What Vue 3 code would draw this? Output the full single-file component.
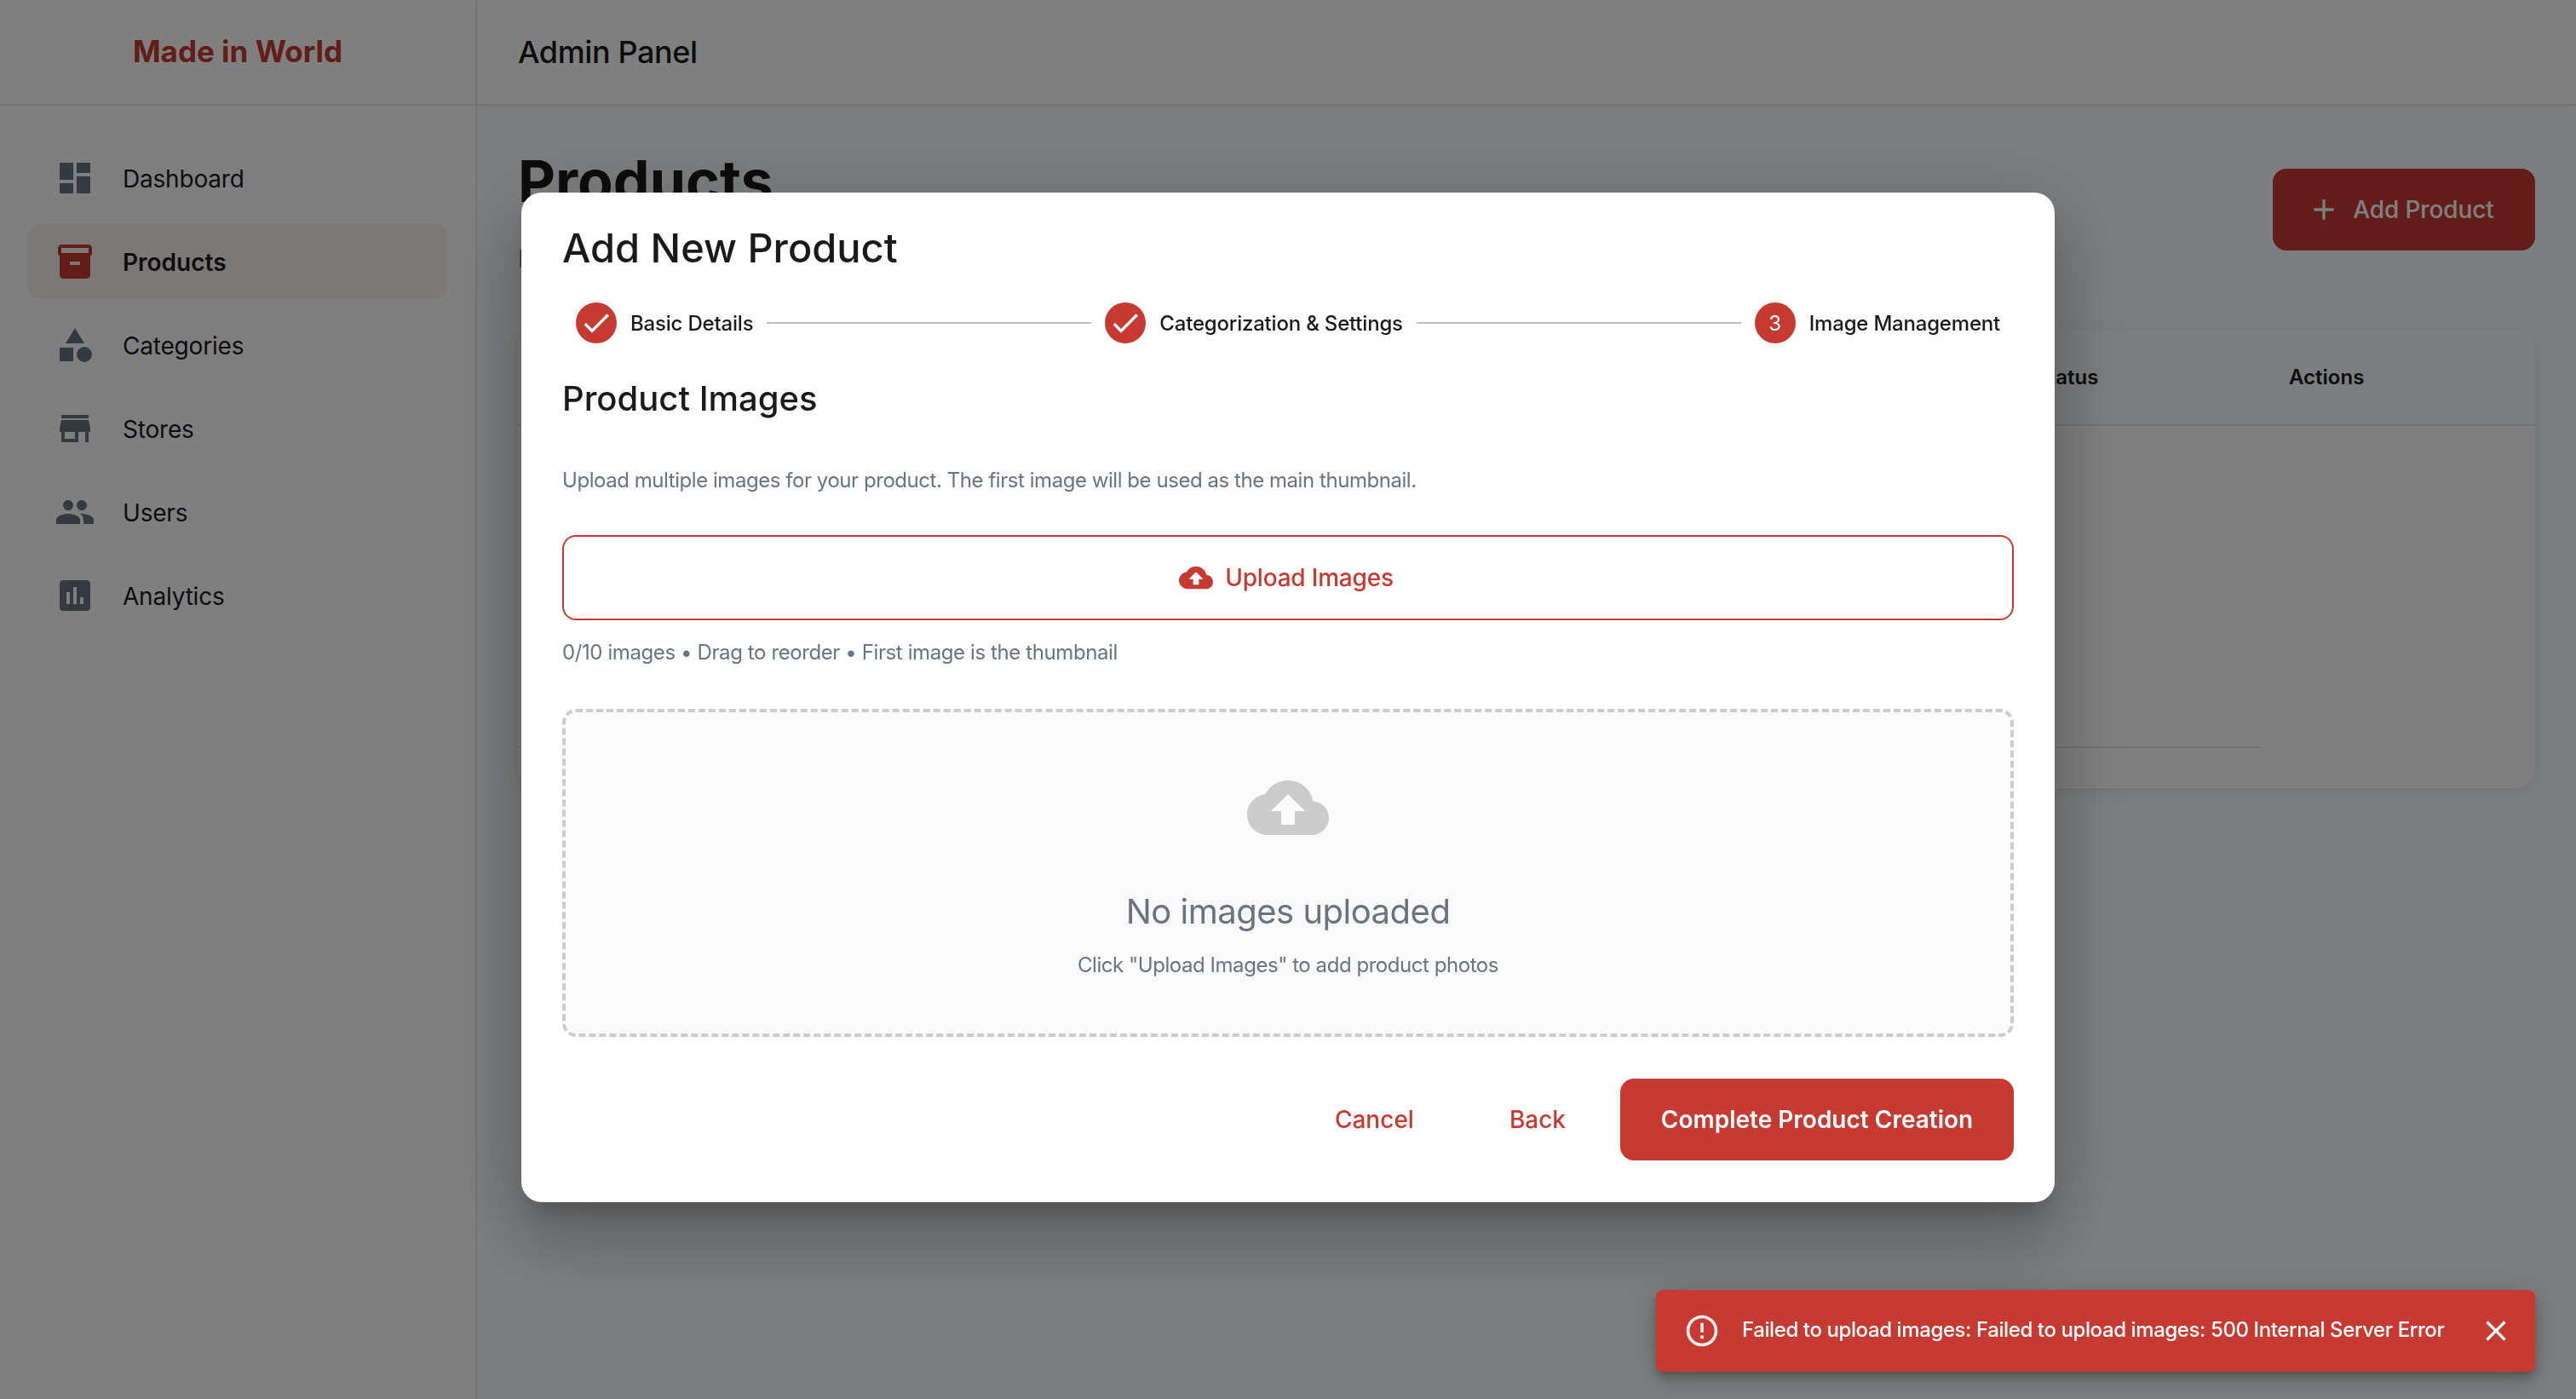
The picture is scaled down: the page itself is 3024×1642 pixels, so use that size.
<script setup>
const navItems = [
  { label: "Dashboard", icon: "M3 13h8V3H3v10zm0 8h8v-6H3v6zm10 0h8V11h-8v10zm0-18v6h8V3h-8z" },
  { label: "Products", active: true, icon: "M20 2H4c-1 0-2 .9-2 2v3.01c0 .72.43 1.34 1 1.69V20c0 1.1 1.1 2 2 2h14c.9 0 2-.9 2-2V8.7c.57-.35 1-.97 1-1.69V4c0-1.1-1-2-2-2zm-5 12H9v-2h6v2zm5-7H4V4l16-.02V7z" },
  { label: "Categories", icon: "M12 2l-5.5 9h11zM3 13.5h8v8H3zM17.5 13a4.5 4.5 0 1 0 0 9 4.5 4.5 0 0 0 0-9z" },
  { label: "Stores", icon: "M20 4H4v2h16V4zm1 10v-2l-1-5H4l-1 5v2h1v6h10v-6h4v6h2v-6h1zm-9 4H6v-4h6v4z" },
  { label: "Users", icon: "M16 11c1.66 0 2.99-1.34 2.99-3S17.66 5 16 5c-1.66 0-3 1.34-3 3s1.34 3 3 3zm-8 0c1.66 0 2.99-1.34 2.99-3S9.66 5 8 5C6.34 5 5 6.34 5 8s1.34 3 3 3zm0 2c-2.33 0-7 1.17-7 3.5V19h14v-2.5c0-2.33-4.67-3.5-7-3.5zm8 0c-.29 0-.62.02-.97.05 1.16.84 1.97 1.97 1.97 3.45V19h6v-2.5c0-2.33-4.67-3.5-7-3.5z" },
  { label: "Analytics", icon: "M19 3H5c-1.1 0-2 .9-2 2v14c0 1.1.9 2 2 2h14c1.1 0 2-.9 2-2V5c0-1.1-.9-2-2-2zM9 17H7v-7h2v7zm4 0h-2V7h2v10zm4 0h-2v-4h2v4z" },
];

const steps = [
  { label: "Basic Details", done: true },
  { label: "Categorization & Settings", done: true },
  { label: "Image Management", done: false, number: 3 },
];

const cloudUpload =
  "M19.35 10.04C18.67 6.59 15.64 4 12 4 9.11 4 6.6 5.64 5.35 8.04 2.34 8.36 0 10.91 0 14c0 3.31 2.69 6 6 6h13c2.76 0 5-2.24 5-5 0-2.64-2.05-4.78-4.65-4.96zM14 13v4h-4v-4H7l5-5 5 5h-3z";
</script>

<template>
  <div class="layout">
    <aside class="sidebar">
      <div class="logo">Made in World</div>
      <nav class="nav">
        <a
          v-for="item in navItems"
          :key="item.label"
          class="nav-item"
          :class="{ active: item.active }"
        >
          <svg class="nav-icon" viewBox="0 0 24 24"><path :d="item.icon" /></svg>
          <span>{{ item.label }}</span>
        </a>
      </nav>
    </aside>

    <div class="content">
      <header class="topbar">Admin Panel</header>
      <main class="main">
        <div class="page-head">
          <div>
            <h1>Products</h1>
            <p class="page-sub">Manage</p>
          </div>
          <button class="add-btn">
            <svg viewBox="0 0 24 24"><path d="M19 13h-6v6h-2v-6H5v-2h6V5h2v6h6v2z" /></svg>
            Add Product
          </button>
        </div>

        <section class="table-card">
          <div class="table-head">
            <span>Status</span>
            <span>Actions</span>
          </div>
          <div class="table-body"></div>
          <div class="table-rule"></div>
        </section>
      </main>
    </div>

    <div class="overlay">
      <div class="modal">
        <h2 class="modal-title">Add New Product</h2>

        <div class="stepper">
          <template v-for="(step, i) in steps" :key="step.label">
            <div v-if="i > 0" class="step-line"></div>
            <div class="step">
              <span class="step-dot">
                <svg v-if="step.done" viewBox="0 0 24 24">
                  <path d="M9 16.17L4.83 12l-1.41 1.41L9 19 21 7l-1.41-1.41z" />
                </svg>
                <template v-else>{{ step.number }}</template>
              </span>
              <span class="step-label">{{ step.label }}</span>
            </div>
          </template>
        </div>

        <h3 class="section-title">Product Images</h3>
        <p class="section-desc">
          Upload multiple images for your product. The first image will be used as the main thumbnail.
        </p>

        <button class="upload-btn">
          <svg viewBox="0 0 24 24"><path :d="cloudUpload" /></svg>
          Upload Images
        </button>
        <p class="helper">0/10 images • Drag to reorder • First image is the thumbnail</p>

        <div class="dropzone">
          <svg class="drop-icon" viewBox="0 0 24 24"><path :d="cloudUpload" /></svg>
          <div class="drop-title">No images uploaded</div>
          <div class="drop-sub">Click "Upload Images" to add product photos</div>
        </div>

        <div class="actions">
          <button class="text-btn cancel">Cancel</button>
          <button class="text-btn back">Back</button>
          <button class="primary-btn">Complete Product Creation</button>
        </div>
      </div>
    </div>

    <div class="toast">
      <svg class="toast-icon" viewBox="0 0 24 24">
        <path d="M11 15h2v2h-2zm0-8h2v6h-2zm.99-5C6.47 2 2 6.48 2 12s4.47 10 9.99 10C17.52 22 22 17.52 22 12S17.52 2 11.99 2zM12 20c-4.42 0-8-3.58-8-8s3.58-8 8-8 8 3.58 8 8-3.58 8-8 8z" />
      </svg>
      <span class="toast-text">Failed to upload images: Failed to upload images: 500 Internal Server Error</span>
      <svg class="toast-close" viewBox="0 0 24 24">
        <path d="M19 6.41L17.59 5 12 10.59 6.41 5 5 6.41 10.59 12 5 17.59 6.41 19 12 13.41 17.59 19 19 17.59 13.41 12z" />
      </svg>
    </div>
  </div>
</template>

<style>
html,
body {
  margin: 0;
  background: #f8fafc;
}
</style>

<style scoped>
.layout {
  display: flex;
  height: 1642px;
  overflow: hidden;
  font-family: Inter, "Noto Sans", sans-serif;
  color: #1a1a1a;
  background: #f8fafc;
}
.sidebar {
  width: 558px;
  flex-shrink: 0;
  background: #fff;
  border-right: 2px solid #e5e7eb;
}
.logo {
  height: 120px;
  padding-bottom: 2px;
  border-bottom: 2px solid #e5e7eb;
  display: flex;
  align-items: center;
  justify-content: center;
  color: #c73a31;
  font-size: 35px;
  font-weight: 700;
}
.nav {
  padding: 41px 32px 0;
  display: flex;
  flex-direction: column;
  gap: 10px;
}
.nav-item {
  height: 88px;
  padding-left: 32px;
  display: flex;
  align-items: center;
  gap: 32px;
  border-radius: 16px;
  font-size: 28px;
  letter-spacing: -0.2px;
}
.nav-item span {
  padding-top: 2px;
}
.nav-item.active {
  background: #f9f0ee;
  font-weight: 600;
  letter-spacing: 0;
}
.nav-icon {
  width: 48px;
  height: 48px;
  fill: #6b7280;
}
.nav-item.active .nav-icon {
  fill: #c73a31;
}
.content {
  flex: 1;
  min-width: 0;
}
.topbar {
  height: 121px;
  padding-bottom: 1px;
  padding-left: 48px;
  display: flex;
  align-items: center;
  background: #fff;
  border-bottom: 2px solid #e5e7eb;
  box-shadow: 0 2px 8px rgba(0, 0, 0, 0.04);
  font-size: 36px;
  font-weight: 500;
  letter-spacing: -0.4px;
}
.main {
  padding: 48px;
}
.page-head {
  height: 148px;
  margin-bottom: 66px;
  display: flex;
  align-items: center;
  justify-content: space-between;
}
h1 {
  margin: 0;
  font-size: 68px;
  line-height: 82px;
  font-weight: 700;
}
.page-sub {
  margin: 34px 0 0;
  font-size: 28px;
  color: #6b7280;
}
.add-btn {
  width: 308px;
  height: 96px;
  padding: 0 8px 0 0;
  border: 0;
  border-radius: 16px;
  background: #c73a31;
  color: #fff;
  font: 500 28px Inter, sans-serif;
  letter-spacing: -0.1px;
  display: flex;
  align-items: center;
  justify-content: center;
  gap: 14px;
}
.add-btn svg {
  width: 40px;
  height: 40px;
  fill: #fff;
}
.table-card {
  height: 539px;
  border-radius: 24px;
  background: #fff;
  box-shadow: 0 4px 16px rgba(0, 0, 0, 0.08);
  overflow: hidden;
}
.table-head {
  height: 112px;
  display: grid;
  grid-template-columns: 298px 1fr;
  align-items: center;
  padding-left: 1781px;
  background: #f8fafc;
  border-bottom: 2px solid #e5e7eb;
  font-size: 24px;
  font-weight: 600;
}
.table-body {
  height: 376px;
}
.table-rule {
  width: 2046px;
  height: 2px;
  background: #e5e7eb;
}
.overlay {
  position: fixed;
  inset: 0;
  display: flex;
  align-items: center;
  justify-content: center;
  background: rgba(0, 0, 0, 0.5);
}
.modal {
  width: 1800px;
  height: 1185px;
  margin-top: -5px;
  box-sizing: border-box;
  padding: 31px 48px 48px;
  border-radius: 24px;
  background: #fff;
  box-shadow: 0 22px 30px -14px rgba(0, 0, 0, 0.2), 0 48px 76px 6px rgba(0, 0, 0, 0.14),
    0 18px 92px 16px rgba(0, 0, 0, 0.12);
}
.modal-title {
  margin: 0;
  font-size: 47px;
  line-height: 68px;
  font-weight: 500;
}
.stepper {
  margin-top: 30px;
  padding: 0 16px;
  display: flex;
  align-items: center;
}
.step {
  display: flex;
  align-items: center;
  gap: 16px;
}
.step-dot {
  width: 48px;
  height: 48px;
  border-radius: 50%;
  background: #c73a31;
  color: #fff;
  font-size: 24px;
  display: flex;
  align-items: center;
  justify-content: center;
}
.step-dot svg {
  width: 40px;
  height: 40px;
  fill: #fff;
}
.step-label {
  font-size: 24px;
  font-weight: 500;
  letter-spacing: -0.2px;
}
.step-line {
  flex: 1;
  height: 2px;
  margin: 0 16px;
  background: #bdbdbd;
}
.section-title {
  margin: 37px 0 0;
  font-size: 40px;
  line-height: 56px;
  font-weight: 500;
}
.section-desc {
  margin: 48px 0 0;
  font-size: 24px;
  line-height: 40px;
  letter-spacing: -0.45px;
  color: #6b7280;
}
.upload-btn {
  width: 100%;
  height: 100px;
  margin-top: 44px;
  padding: 0 4px 0 0;
  border: 2px solid #c73a31;
  border-radius: 16px;
  background: #fff;
  color: #c73a31;
  font: 500 28px Inter, sans-serif;
  letter-spacing: -0.2px;
  display: flex;
  align-items: center;
  justify-content: center;
  gap: 14px;
}
.upload-btn svg {
  width: 40px;
  height: 40px;
  fill: #c73a31;
}
.helper {
  margin: 18px 0 0;
  font-size: 24px;
  line-height: 40px;
  letter-spacing: -0.4px;
  color: #6b7280;
}
.dropzone {
  height: 385px;
  box-sizing: border-box;
  margin-top: 46px;
  border: 4px dashed #ccc;
  border-radius: 16px;
  background: #fafafa;
  display: flex;
  flex-direction: column;
  align-items: center;
  padding-top: 64px;
}
.drop-icon {
  width: 96px;
  height: 96px;
  fill: #ccc;
}
.drop-title {
  margin-top: 46px;
  font-size: 40px;
  line-height: 56px;
  letter-spacing: -0.5px;
  color: #6b7280;
}
.drop-sub {
  margin-top: 15px;
  font-size: 24px;
  line-height: 40px;
  letter-spacing: -0.45px;
  color: #6b7280;
}
.actions {
  margin-top: 49px;
  display: flex;
  justify-content: flex-end;
  align-items: center;
}
.text-btn {
  border: 0;
  background: none;
  color: #c73a31;
  font: 500 28px Inter, sans-serif;
  padding: 0;
}
.cancel {
  margin-right: 112px;
}
.back {
  margin-right: 64px;
}
.primary-btn {
  width: 462px;
  height: 96px;
  border: 0;
  border-radius: 16px;
  background: #c73a31;
  color: #fff;
  font: 600 28px Inter, sans-serif;
}
.toast {
  position: fixed;
  right: 48px;
  bottom: 32px;
  width: 1032px;
  height: 96px;
  box-sizing: border-box;
  padding: 0 26px 0 32px;
  display: flex;
  align-items: center;
  border-radius: 8px;
  background: #c73a31;
  color: #fff;
  box-shadow: 0 6px 10px -2px rgba(0, 0, 0, 0.2), 0 12px 20px rgba(0, 0, 0, 0.14),
    0 2px 36px rgba(0, 0, 0, 0.12);
}
.toast-icon {
  flex-shrink: 0;
  width: 44px;
  height: 44px;
  fill: #fff;
  opacity: 0.9;
}
.toast-text {
  margin-left: 25px;
  margin-top: -3px;
  font-size: 24px;
  font-weight: 500;
  letter-spacing: -0.4px;
  white-space: nowrap;
}
.toast-close {
  flex-shrink: 0;
  width: 40px;
  height: 40px;
  margin-left: auto;
  fill: #fff;
}
</style>
